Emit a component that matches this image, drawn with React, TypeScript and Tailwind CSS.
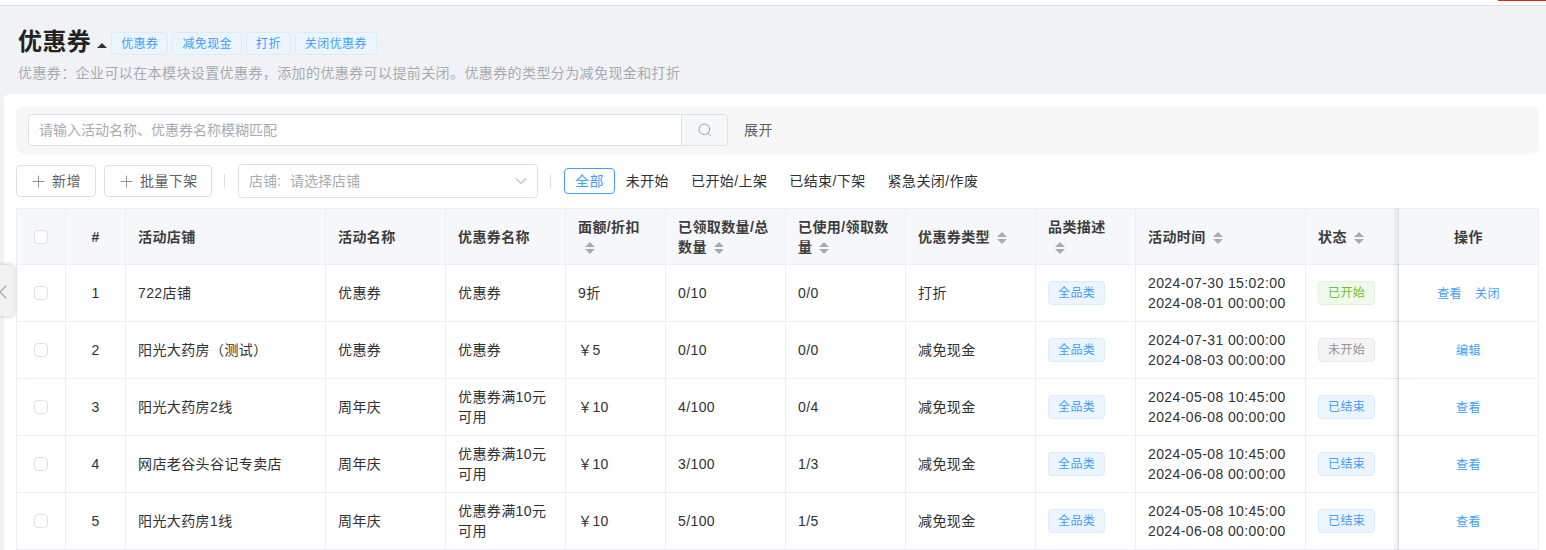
import { ChevronDown, ChevronLeft, Plus, Search } from 'lucide-react';
import type { ReactNode } from 'react';

const TOP_TAGS = ['优惠券', '减免现金', '打折', '关闭优惠券'];
const TABS = ['全部', '未开始', '已开始/上架', '已结束/下架', '紧急关闭/作废'];
const WIDTHS = [49, 60, 200, 120, 120, 100, 120, 120, 130, 100, 170, 93, 140];

// full-width punctuation is escaped so it stays what the screenshot shows
const DESCRIPTION = '优惠券\uFF1A企业可以在本模块设置优惠券\uFF0C添加的优惠券可以提前关闭。优惠券的类型分为减免现金和打折';

const ROWS = [
  { store: '722店铺', name: '优惠券', coupon: '优惠券', value: '9折', got: '0/10', used: '0/0', type: '打折', start: '2024-07-30 15:02:00', end: '2024-08-01 00:00:00', status: '已开始', ops: ['查看', '关闭'] },
  { store: '阳光大药房\uFF08测试\uFF09', name: '优惠券', coupon: '优惠券', value: '\uFFE55', got: '0/10', used: '0/0', type: '减免现金', start: '2024-07-31 00:00:00', end: '2024-08-03 00:00:00', status: '未开始', ops: ['编辑'] },
  { store: '阳光大药房2线', name: '周年庆', coupon: '优惠券满10元可用', value: '\uFFE510', got: '4/100', used: '0/4', type: '减免现金', start: '2024-05-08 10:45:00', end: '2024-06-08 00:00:00', status: '已结束', ops: ['查看'] },
  { store: '网店老谷头谷记专卖店', name: '周年庆', coupon: '优惠券满10元可用', value: '\uFFE510', got: '3/100', used: '1/3', type: '减免现金', start: '2024-05-08 10:45:00', end: '2024-06-08 00:00:00', status: '已结束', ops: ['查看'] },
  { store: '阳光大药房1线', name: '周年庆', coupon: '优惠券满10元可用', value: '\uFFE510', got: '5/100', used: '1/5', type: '减免现金', start: '2024-05-08 10:45:00', end: '2024-06-08 00:00:00', status: '已结束', ops: ['查看'] },
];

function Tag({ children, color = 'blue', small = false }: { children: ReactNode; color?: 'blue' | 'green' | 'gray'; small?: boolean }) {
  const tone = {
    blue: 'bg-[#ecf5ff] border-[#d9ecff] text-[#409eff]',
    green: 'bg-[#f0f9eb] border-[#e1f3d8] text-[#67c23a]',
    gray: 'bg-[#f4f4f5] border-[#e9e9eb] text-[#909399]',
  }[color];
  return (
    <span className={`inline-flex items-center rounded border px-[9px] text-xs whitespace-nowrap ${small ? 'h-[23px]' : 'h-6'} ${tone}`}>
      {children}
    </span>
  );
}

function SortCaret() {
  return (
    <span className="inline-flex h-[14px] w-6 items-center justify-center align-middle">
      <svg width="10" height="14" viewBox="0 0 10 14" fill="#a8abb2">
        <polygon points="5,1 10,6 0,6" />
        <polygon points="0,8 10,8 5,13" />
      </svg>
    </span>
  );
}

function Checkbox() {
  return <span className="mx-auto block h-[14px] w-[14px] rounded-sm border border-[#dcdfe6] bg-white" />;
}

function FixedShadow() {
  return <span className="absolute -top-px -bottom-px -left-[7px] w-[7px] bg-linear-to-l from-black/8 to-transparent" />;
}

function Head({ children, sort = false, center = false }: { children?: ReactNode; sort?: boolean; center?: boolean }) {
  return (
    <th className={`h-[57px] border-t border-r border-b border-[#ebeef5] bg-[#f5f7fa] px-3 text-sm leading-5 font-semibold text-[#3d3d3d] ${center ? 'text-center' : 'text-left'}`}>
      {children}
      {sort && <SortCaret />}
    </th>
  );
}

function Cell({ children, center = false }: { children?: ReactNode; center?: boolean }) {
  return (
    <td className={`h-[57px] border-r border-b border-[#ebeef5] px-3 text-sm leading-5 text-[#303133] ${center ? 'text-center' : 'text-left'}`}>
      {children}
    </td>
  );
}

function statusColor(status: string) {
  if (status === '已开始') return 'green';
  if (status === '未开始') return 'gray';
  return 'blue';
}

export default function App() {
  return (
    <div className="relative h-[550px] overflow-hidden bg-[#f0f2f5] font-['Liberation_Sans','Noto_Sans_CJK_SC',sans-serif] tracking-[0.4px]">
      <div className="flex h-[6px] justify-end border-b border-[#dcdfe6] bg-white">
        <div className="h-px w-[48px] bg-[#d9281e]" />
      </div>

      <div className="h-[88px] pt-[21px] pl-[18px]">
        <div className="flex h-[30px] items-center">
          <h1 className="text-2xl leading-[30px] font-bold text-[#222]">优惠券</h1>
          <span className="mt-[6px] mr-[4px] ml-[6px] h-0 w-0 border-x-[5px] border-b-[5px] border-x-transparent border-b-[#303133]" />
          <div className="mt-[3px] flex gap-1">
            {TOP_TAGS.map((t) => (
              <Tag key={t} small>{t}</Tag>
            ))}
          </div>
        </div>
        <p className="mt-[6px] text-sm leading-5 text-[#a8abb2]">{DESCRIPTION}</p>
      </div>

      <div className="ml-1 h-[456px] rounded-tl-md bg-white pt-3 pr-[7px] pl-3">
        <div className="flex h-12 items-center rounded-lg bg-[#f7f7f7] pl-3">
          <div className="flex h-8 w-[700px] rounded border border-[#dcdfe6] bg-white">
            <input
              className="min-w-0 flex-1 rounded-l px-[10px] text-sm tracking-normal outline-none placeholder:text-[#a8abb2]"
              placeholder="请输入活动名称、优惠券名称模糊匹配"
            />
            <div className="flex w-[46px] items-center justify-center rounded-r border-l border-[#dcdfe6] bg-[#f5f7fa] text-[#909399]">
              <Search size={16} strokeWidth={1.3} />
            </div>
          </div>
          <span className="ml-4 text-sm text-[#606266]">展开</span>
        </div>

        <div className="mt-[10px] flex h-[34px] items-center">
          <button className="flex h-8 w-20 items-center gap-1 rounded border border-[#dcdfe6] pl-3 text-sm text-[#606266]">
            <Plus size={19} strokeWidth={1.3} className="text-[#909399]" />
            新增
          </button>
          <button className="ml-2 flex h-8 w-[108px] items-center gap-1 rounded border border-[#dcdfe6] pl-3 text-sm text-[#606266]">
            <Plus size={19} strokeWidth={1.3} className="text-[#909399]" />
            批量下架
          </button>
          <span className="mr-[13px] ml-3 h-[14px] w-px bg-[#dcdfe6]" />
          <div className="flex h-[34px] w-[300px] items-center rounded border border-[#dcdfe6] pr-[6px] pl-[10px] text-sm tracking-normal text-[#a8abb2]">
            <span>店铺:</span>
            <span className="ml-[9px] flex-1">请选择店铺</span>
            <ChevronDown size={20} strokeWidth={1.3} className="text-[#c0c4cc]" />
          </div>
          <span className="mr-[13px] ml-3 h-[14px] w-px bg-[#dcdfe6]" />
          <div className="flex items-center">
            {TABS.map((t, i) => (
              <span
                key={t}
                className={
                  i === 0
                    ? 'flex h-[26px] items-center rounded-sm border border-[#409eff] px-[10px] text-sm text-[#409eff]'
                    : 'flex h-[26px] items-center px-[11px] text-sm text-[#303133]'
                }
              >
                {t}
              </span>
            ))}
          </div>
        </div>

        <table className="mt-[10px] w-[1523px] table-fixed border-separate border-spacing-0 border-l border-[#ebeef5]">
          <colgroup>
            {WIDTHS.map((w, i) => (
              <col key={i} style={{ width: w }} />
            ))}
          </colgroup>
          <thead>
            <tr>
              <Head><Checkbox /></Head>
              <Head center>#</Head>
              <Head>活动店铺</Head>
              <Head>活动名称</Head>
              <Head>优惠券名称</Head>
              <Head sort>面额/折扣</Head>
              <Head sort>已领取数量/总数量</Head>
              <Head sort>已使用/领取数量</Head>
              <Head sort>优惠券类型</Head>
              <Head sort>品类描述</Head>
              <Head sort>活动时间</Head>
              <Head sort>状态</Head>
              <th className="relative h-[57px] border-t border-r border-b border-[#ebeef5] bg-[#f5f7fa] text-center text-sm font-semibold text-[#3d3d3d]">
                <FixedShadow />
                操作
              </th>
            </tr>
          </thead>
          <tbody>
            {ROWS.map((row, i) => (
              <tr key={i}>
                <Cell><Checkbox /></Cell>
                <Cell center>{i + 1}</Cell>
                <Cell>{row.store}</Cell>
                <Cell>{row.name}</Cell>
                <Cell>{row.coupon}</Cell>
                <Cell>{row.value}</Cell>
                <Cell>{row.got}</Cell>
                <Cell>{row.used}</Cell>
                <Cell>{row.type}</Cell>
                <Cell><Tag>全品类</Tag></Cell>
                <Cell>{row.start}<br />{row.end}</Cell>
                <Cell><Tag color={statusColor(row.status)}>{row.status}</Tag></Cell>
                <td className="relative h-[57px] border-r border-b border-[#ebeef5] bg-white pt-[2px] text-center text-xs text-[#409eff]">
                  <FixedShadow />
                  <div className="flex justify-center gap-[13px]">
                    {row.ops.map((op) => (
                      <span key={op}>{op}</span>
                    ))}
                  </div>
                </td>
              </tr>
            ))}
          </tbody>
        </table>
      </div>

      <div className="absolute top-[265px] left-0 flex h-[51px] w-[14px] items-center overflow-hidden rounded-r bg-[#f2f2f2] shadow-[0_0_4px_rgba(0,0,0,0.25)]">
        <ChevronLeft size={24} strokeWidth={1.3} className="mt-[3px] -ml-[9px] shrink-0 text-[#a8abb2]" />
      </div>
    </div>
  );
}
